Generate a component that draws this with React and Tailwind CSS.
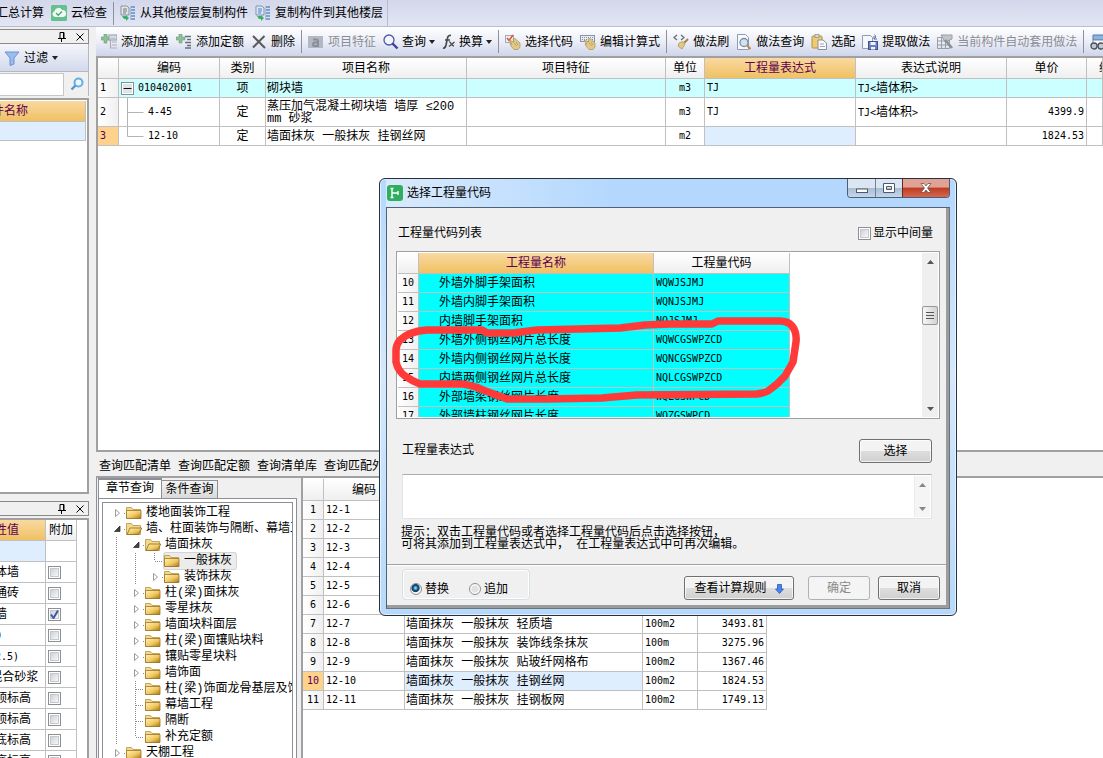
import { useState } from 'react';

const billRows = [
  { code: '010402001', type: '项', name: '砌块墙', unit: 'm3', expr: 'TJ', desc: '墙体积', price: '' },
  { code: '4-45', type: '定', name: '蒸压加气混凝土砌块墙 墙厚 ≤200', name2: 'mm 砂浆', unit: 'm3', expr: 'TJ', desc: '墙体积', price: '4399.9' },
  { code: '12-10', type: '定', name: '墙面抹灰 一般抹灰 挂钢丝网', unit: 'm2', expr: '', desc: '', price: '1824.53' },
];

const quotaRows = [
  ['12-1', '墙面抹灰 一般抹灰', '100m2', ''],
  ['12-2', '墙面抹灰 一般抹灰', '100m2', ''],
  ['12-3', '墙面抹灰 一般抹灰', '100m2', ''],
  ['12-4', '墙面抹灰 一般抹灰', '100m2', ''],
  ['12-5', '墙面抹灰 一般抹灰', '100m2', ''],
  ['12-6', '墙面抹灰 一般抹灰', '100m2', ''],
  ['12-7', '墙面抹灰 一般抹灰 轻质墙', '100m2', '3493.81'],
  ['12-8', '墙面抹灰 一般抹灰 装饰线条抹灰', '100m', '3275.96'],
  ['12-9', '墙面抹灰 一般抹灰 贴玻纤网格布', '100m2', '1367.46'],
  ['12-10', '墙面抹灰 一般抹灰 挂钢丝网', '100m2', '1824.53'],
  ['12-11', '墙面抹灰 一般抹灰 挂钢板网', '100m2', '1749.13'],
];

const codeRows = [
  [10, '外墙外脚手架面积', 'WQWJSJMJ'],
  [11, '外墙内脚手架面积', 'WQNJSJMJ'],
  [12, '内墙脚手架面积', 'NQJSJMJ'],
  [13, '外墙外侧钢丝网片总长度', 'WQWCGSWPZCD'],
  [14, '外墙内侧钢丝网片总长度', 'WQNCGSWPZCD'],
  [15, '内墙两侧钢丝网片总长度', 'NQLCGSWPZCD'],
  [16, '外部墙梁钢丝网片长度', 'WQLGSWPCD'],
  [17, '外部墙柱钢丝网片长度', 'WQZGSWPCD'],
];

// guides: v = line, c = closed arrow, o = open arrow, t = tee, l = elbow
const treeRows = [
  { guides: 'c', label: '楼地面装饰工程' },
  { guides: 'o', label: '墙、柱面装饰与隔断、幕墙工程', open: true },
  { guides: 'vo', label: '墙面抹灰', open: true },
  { guides: 'vvl', label: '一般抹灰', selected: true },
  { guides: 'vvc', label: '装饰抹灰' },
  { guides: 'vc', label: '柱(梁)面抹灰' },
  { guides: 'vc', label: '零星抹灰' },
  { guides: 'vc', label: '墙面块料面层' },
  { guides: 'vc', label: '柱(梁)面镶贴块料' },
  { guides: 'vc', label: '镶贴零星块料' },
  { guides: 'vc', label: '墙饰面' },
  { guides: 'vt', label: '柱(梁)饰面龙骨基层及饰面' },
  { guides: 'vt', label: '幕墙工程' },
  { guides: 'vt', label: '隔断' },
  { guides: 'vl', label: '补充定额' },
  { guides: 'c', label: '天棚工程' },
];

const propertyRows = [
  { value: '砌体墙', checked: false },
  { value: '普通砖', checked: false },
  { value: '砖墙', checked: true },
  { value: '240', checked: false, latin: true },
  { value: '(M2.5)', checked: false, latin: true },
  { value: '-混合砂浆', checked: false },
  { value: '墙顶标高', checked: false },
  { value: '墙顶标高', checked: false },
  { value: '墙底标高', checked: false },
  { value: '墙底标高', checked: false },
];

const line = 'border-r border-b border-[#c0c0c0]';
const head = 'border-r border-b border-[#c0c0c0] bg-linear-to-b from-white to-[#efefef] p-0 pt-0.5 font-normal';
const headActive = 'border-r border-b border-[#c0c0c0] bg-linear-to-b from-[#f9d9a0] to-[#f0c162] p-0 pt-0.5 font-normal text-[#5c0050]';
const num = "font-['DejaVu_Sans_Mono','Noto_Sans_CJK_SC',monospace] text-[10px]";

function Caret() {
  return (
    <svg className="h-1 w-1.5 shrink-0" viewBox="0 0 7 4" preserveAspectRatio="none"><path d="M0 0h7L3.500 4z" fill="#222" /></svg>
  );
}

function CopyIcon({ down }) {
  return (
    <svg className="size-4 shrink-0" viewBox="0 0 16 16">
      <path d="M1 1h6l2 2v7H1z" fill={down ? '#d8e8f8' : '#e4e4e4'} stroke="#8793a5" />
      <path d="M3 4h4M3 6h4M3 8h3" stroke={down ? '#4b84c4' : '#777'} />
      <path d="M2 11h4v-1l3 3-3 3v-2H4z" fill="#3fae6b" />
      <path d="M11 2h4M11 5h4M11 8h4M11 11h4M11 14h4" stroke="#5f8fc4" strokeWidth="1.6" />
      <path d="M10.500 1v14" stroke="#a9c3de" />
    </svg>
  );
}

function CloudCheckIcon() {
  return (
    <svg className="size-4 shrink-0" viewBox="0 0 16 16">
      <rect width="16" height="16" rx="1.500" fill="#63c18c" />
      <path d="M4 12a3 3 0 0 1-.5-5.800A4 4 0 0 1 11 5a3.500 3.500 0 0 1 1 7z" fill="#f2faf5" />
      <path d="M5 8l2.200 2.200L11 6.500" fill="none" stroke="#4aa974" strokeWidth="1.400" />
    </svg>
  );
}

function AddIcon({ list }) {
  return (
    <svg className="size-4 shrink-0" viewBox="0 0 16 16">
      <path d="M3 0h3v3h3v3H6v3H3V6H0V3h3z" fill="#8fbf98" stroke="#6b9f77" strokeWidth=".6" />
      {list ? (
        <>
          <rect x="8" y="1" width="8" height="5" fill="#eceff4" stroke="#8b95a5" />
          <path d="M9.500 3h5.500M9.500 4.500h5.500" stroke="#8b95a5" strokeDasharray="1 1" />
          <path d="M11 8h5M11 11h5M11 14h5M9.500 6v8h2" fill="none" stroke="#a9aeb6" strokeWidth="1.200" />
        </>
      ) : (
        <path d="M9 2.500h6M11 5.500h4M9 8.500h6M11 11.500h4M9 14h6" stroke="#68707c" strokeWidth="1.300" />
      )}
    </svg>
  );
}

function DeleteIcon() {
  return (
    <svg className="size-4 shrink-0" viewBox="0 0 16 16"><path d="M2 2l12 12M13.500 2L2 13.500" stroke="#5b5b5b" strokeWidth="2" /></svg>
  );
}

function FeatureIcon() {
  return (
    <svg className="size-4 shrink-0" viewBox="0 0 16 16">
      <rect x="0" y="2" width="15" height="12" fill="#b4b8c2" />
      <path d="M5 5.500h3.500q1.500 0 1.500 1.500v5H6.500Q5 12 5 10.500T6.500 8.500H10" fill="none" stroke="#8a8e99" strokeWidth="2" />
    </svg>
  );
}

function SearchIcon() {
  return (
    <svg className="size-4 shrink-0" viewBox="0 0 16 16">
      <circle cx="6" cy="6" r="5" fill="#f4f6ff" stroke="#5055a8" strokeWidth="1.300" />
      <path d="M9.500 9.500l5 5" stroke="#3a3f9c" strokeWidth="2.400" />
    </svg>
  );
}

function FxIcon() {
  return (
    <svg className="h-4 w-3.5 shrink-0" viewBox="0 0 14 16" fill="none" stroke="#4c4c4c">
      <path d="M1 14c2 .5 2.500-1 3-3l1.500-7c.4-2 1.500-3 3.500-2.500M3 6h5" strokeWidth="1.700" />
      <path d="M7 8c2-1 2 4 5 4M12.500 8L7 12.500" strokeWidth="1.400" />
    </svg>
  );
}

function HandIcon({ keyboard }) {
  return (
    <svg className="size-4 shrink-0" viewBox="0 0 16 16">
      {keyboard ? (
        <>
          <rect x=".5" y="1.500" width="14" height="6" fill="#e7ebf2" stroke="#8a93a3" />
          <path d="M2 3.500h11M2 5.500h11" stroke="#8a93a3" strokeDasharray="1 1" />
        </>
      ) : (
        <>
          <rect x=".5" y="1.500" width="8" height="7" fill="#eef0f5" stroke="#a3aab8" />
          <path d="M2 4l2 2.500L8 1" fill="none" stroke="#e0503a" strokeWidth="1.500" />
        </>
      )}
      <path d="M4 6l5 2-1-3 2-.5 5 4.500v4l-2 2.500H9L6 12l-1-2.500 2 .5z" fill="#dfc88a" stroke="#a8904f" strokeWidth=".7" />
      <path d="M9 9l3 3M11 8l2 3" stroke="#a8904f" strokeWidth=".6" />
    </svg>
  );
}

function BrushIcon() {
  return (
    <svg className="size-4 shrink-0" viewBox="0 0 16 16">
      <path d="M4 1L1 3.500 4 6M8 1l3 2.500L8 6" fill="none" stroke="#626a78" strokeWidth="1.200" />
      <path d="M15 5l-4 4" stroke="#9b8450" strokeWidth="2" />
      <path d="M6 9l4-1.500 2 2.500-3 5-4-3z" fill="#e0c887" stroke="#a89055" strokeWidth=".7" />
    </svg>
  );
}

function PageSearchIcon() {
  return (
    <svg className="size-4 shrink-0" viewBox="0 0 16 16">
      <path d="M1.500.5h8l3 3v12h-11z" fill="#f7f9fc" stroke="#8e9db3" />
      <circle cx="8" cy="8.500" r="4" fill="#cfe3f2" stroke="#7d8ea3" strokeWidth="1.300" />
      <path d="M11 11.500l3.500 3.500" stroke="#c48a3c" strokeWidth="2" />
    </svg>
  );
}

function PasteIcon() {
  return (
    <svg className="size-4 shrink-0" viewBox="0 0 16 16">
      <rect x="1" y="2" width="10" height="12" rx="1" fill="#edcb72" stroke="#b58f38" />
      <rect x="4" y=".5" width="4" height="3" fill="#d8d8d8" stroke="#8b8b8b" strokeWidth=".7" />
      <path d="M7 6h5l3.500 3v6.500H7z" fill="#fafafa" stroke="#8590a2" />
      <path d="M9 10h4M9 12.500h5" stroke="#9aa4b3" />
    </svg>
  );
}

function ExtractIcon() {
  return (
    <svg className="size-4 shrink-0" viewBox="0 0 16 16">
      <path d="M.5 1.500h8l2 2v11H.5z" fill="#f4f7fc" stroke="#8f9cb3" />
      <path d="M12 5c2-1 2-3 .5-4.500M12 5l0-3M12 5l3 0" fill="none" stroke="#56739e" />
      <rect x="6.500" y="7.500" width="9" height="8" fill="#6a7fbe" stroke="#3f5390" />
      <path d="M8.500 8h5v3h-5zM9 13h4v2.500H9z" fill="#eef2fb" />
    </svg>
  );
}

function GridIcon() {
  return (
    <svg className="size-4 shrink-0" viewBox="0 0 16 16" stroke="#9a9da4" fill="none">
      <path d="M.5 3.500h12v11H.5zM.5 7h12M.5 11h12M4.500 3.500v11M8.500 3.500v11" />
      <path d="M4 1h11v4L8 8z" fill="#c2c5cb" />
      <path d="M8 6l7 8" strokeWidth="2.500" stroke="#8c8f96" />
    </svg>
  );
}

function FindIcon() {
  return (
    <svg className="size-4 shrink-0" viewBox="0 0 16 16">
      <path d="M3 1h12v5H3z" fill="#8fb3e0" stroke="#5079b3" />
      <path d="M3 6h12v5H3z" fill="#f6f8fb" stroke="#7c8ca5" />
      <circle cx="4" cy="12" r="3" fill="#c4cad3" stroke="#4a525e" strokeWidth="1.300" />
      <circle cx="11" cy="12" r="3" fill="#c4cad3" stroke="#4a525e" strokeWidth="1.300" />
    </svg>
  );
}

function FolderIcon({ open }) {
  return (
    <svg className="h-3.5 w-4 shrink-0" viewBox="0 0 16 14">
      <defs>
        <linearGradient id="folder" x1="0" y1="0" x2="1" y2="1">
          <stop offset="0" stopColor="#fff3b8" />
          <stop offset=".55" stopColor="#f0c860" />
          <stop offset="1" stopColor="#a87518" />
        </linearGradient>
      </defs>
      <path d="M.5 12.500v-11h5l1.500 2h7.500v9z" fill="#f3d98a" stroke="#b8924a" strokeWidth=".8" />
      {open ? (
        <path d="M1 12.500L4 6h11.700l-3 6.500z" fill="url(#folder)" stroke="#8d6a20" strokeWidth=".8" />
      ) : (
        <path d="M.5 4.500h14.500v8H.5z" fill="url(#folder)" stroke="#9c7424" strokeWidth=".8" />
      )}
    </svg>
  );
}

function Guide({ kind }) {
  const dots = { stroke: '#8a8a8a', strokeDasharray: '1 1' };
  return (
    <svg className="h-4 w-[19px] shrink-0" viewBox="0 0 19 16" fill="none">
      {(kind === 'v' || kind === 't') && <path d="M9.500 0v16" {...dots} />}
      {kind === 'l' && <path d="M9.500 0v8" {...dots} />}
      {(kind === 't' || kind === 'l') && <path d="M10 8.500h8" {...dots} />}
      {(kind === 'c' || kind === 'o') && <path d="M17 8.500h2" {...dots} />}
      {kind === 'c' && <path d="M8.500 4.500v7l4-3.500z" fill="#fff" stroke="#9b9b9b" />}
      {kind === 'o' && <path d="M13 5v5.500H7.500z" fill="#444" stroke="#222" strokeWidth=".7" />}
    </svg>
  );
}

function PinIcon() {
  return (
    <svg className="h-2.5 w-2" viewBox="0 0 8 10" fill="none" stroke="#000">
      <path d="M2 6V.5h4V6M5.500 1v5M0 6.500h8M3.500 7v3" />
    </svg>
  );
}

function PanelHeader() {
  return (
    <div className="flex h-[15px] items-center justify-end gap-2.5 border border-[#8a8a8a] bg-[#f0f0f0] pr-1">
      <button aria-label="固定"><PinIcon /></button>
      <button aria-label="关闭">
        <svg className="size-2" viewBox="0 0 8 8"><path d="M.5.5l7 7M7.500.5l-7 7" stroke="#000" /></svg>
      </button>
    </div>
  );
}

function ToolButton({ icon, children, disabled, menu }) {
  return (
    <button disabled={disabled} className={`flex shrink-0 items-center whitespace-nowrap ${menu ? 'gap-[3px]' : 'gap-1'} ${disabled ? 'text-[#8b8d94]' : 'text-black'}`}>
      {icon}
      <span className="pt-0.5">{children}</span>
      {menu && <Caret />}
    </button>
  );
}

function Separator() {
  return <span className="-mx-px h-[23px] w-px shrink-0 bg-[#8d919c]" />;
}

function CheckBox({ label, defaultChecked, children }) {
  return (
    <label className="flex items-center gap-0.5">
      <span className="grid size-[13px] border border-[#8e8f8f] bg-white p-px">
        <input type="checkbox" aria-label={label} defaultChecked={defaultChecked} className="peer col-start-1 row-start-1 size-[9px] appearance-none border border-[#c5c9cf] bg-linear-to-br from-[#cdd2d9] to-[#f8f8f8]" />
        <svg className="pointer-events-none invisible col-start-1 row-start-1 size-[9px] peer-checked:visible" viewBox="0 0 9 9">
          <path d="M1 4.500L3.500 8 8 .5" fill="none" stroke="#3c58a8" strokeWidth="2" />
        </svg>
      </span>
      {children}
    </label>
  );
}

function Radio({ value, mode, setMode }) {
  return (
    <label className="flex items-center gap-[3px]">
      <input
        type="radio"
        name="mode"
        checked={mode === value}
        onChange={() => setMode(value)}
        className="size-3 appearance-none rounded-full border border-[#8e8f8f] bg-[radial-gradient(#dfe1e4_40%,#fafafa_60%)] checked:bg-[radial-gradient(circle_at_45%_40%,#7fd0f4_8%,#0f5688_30%,#123a5c_45%,#f4f4f4_56%)]"
      />
      <span className="pt-0.5">{value}</span>
    </label>
  );
}

function ScrollArrow({ down }) {
  return (
    <button aria-label={down ? '向下' : '向上'} className="flex h-[17px] w-full items-center justify-center">
      <svg className="h-1 w-[7px]" viewBox="0 0 7 4"><path d={down ? 'M0 0h7L3.500 4z' : 'M0 4h7L3.500 0z'} fill="#555" /></svg>
    </button>
  );
}

function DialogButton({ children, className, disabled }) {
  return (
    <button
      disabled={disabled}
      className={`flex h-6 items-center justify-center gap-2 rounded-[3px] border pt-0.5 ${disabled ? 'border-[#adb2b5] bg-[#f4f4f4] text-[#8a8a8a]' : 'border-[#707070] bg-linear-to-b from-[#f3f3f3] from-50% via-[#dedede] via-50% to-[#cfcfcf] inset-ring inset-ring-white/70'} ${className}`}
    >
      {children}
    </button>
  );
}

function Sidebar() {
  return (
    <aside className="flex w-[89px] shrink-0 justify-end overflow-hidden">
      <div className="flex w-[166px] shrink-0 flex-col pt-0.5">
        <section className="flex min-h-0 flex-1 flex-col">
          <PanelHeader />
          <div className="flex h-7 shrink-0 items-center justify-end border-r border-b border-[#b4b8c4] bg-linear-to-b from-[#f5f6fb] to-[#d3d9ec] pr-[30px]">
            <button className="flex items-center gap-1">
              <svg className="size-4" viewBox="0 0 16 16"><path d="M1 2h14L10 8v6l-4 1.500V8z" fill="#9bbcf0" stroke="#6d92d2" /></svg>
              <span className="pt-0.5">过滤</span>
              <Caret />
            </button>
          </div>
          <div className="flex h-6 shrink-0 items-center border-r border-[#b4b8c4]">
            <input aria-label="搜索" className="h-[23px] w-[141px] border border-[#c6c6c6] bg-white px-1 outline-none" />
            <button aria-label="查找" className="ml-1.5">
              <svg className="size-3.5" viewBox="0 0 14 14">
                <circle cx="8.500" cy="5.500" r="4" fill="#eaf6fd" stroke="#66aee0" strokeWidth="2" />
                <path d="M5.500 8.500L1.500 12.500" stroke="#4d97d2" strokeWidth="2.400" />
              </svg>
            </button>
          </div>
          <div className="mt-0.5 flex-1 border-t-2 border-r-2 border-b-2 border-[#a0a0a0] bg-white pt-px pr-px">
            <table className="w-full border-separate border-spacing-0">
              <thead><tr className="h-[21px]"><th className={headActive}>构件名称</th></tr></thead>
              <tbody><tr className="h-[19px]"><td className={`bg-[#dfeeff] p-0 ${line}`} /></tr></tbody>
            </table>
          </div>
        </section>

        <section className="mt-[7px] flex h-[257px] shrink-0 flex-col overflow-hidden">
          <PanelHeader />
          <div className="mt-0.5 flex flex-1 justify-end overflow-hidden border-t-2 border-r-2 border-[#a0a0a0] bg-white pr-2.5">
            <table className="h-fit w-24 shrink-0 table-fixed border-separate border-spacing-0">
              <colgroup><col /><col className="w-[31px]" /></colgroup>
              <thead>
                <tr className="h-[21px]">
                  <th className={`${headActive} pl-0.5 text-left`}>属性值</th>
                  <th className={head}>附加</th>
                </tr>
              </thead>
              <tbody>
                <tr className="h-[21px]">
                  <td className={`bg-[#dfeeff] p-0 ${line}`} />
                  <td className={`p-0 ${line}`} />
                </tr>
                {propertyRows.map((row, i) => (
                  <tr key={i} className="h-[21px]">
                    <td className={`overflow-hidden p-0 pt-0.5 pl-0.5 whitespace-nowrap ${line} ${row.latin ? num : ''}`}>{row.value}</td>
                    <td className={`p-0 pl-0.5 ${line}`}><CheckBox label="附加" defaultChecked={row.checked} /></td>
                  </tr>
                ))}
              </tbody>
            </table>
          </div>
        </section>
      </div>
    </aside>
  );
}

function BillTable() {
  return (
    <div className="min-h-0 flex-1 overflow-hidden border-t-2 border-b-2 border-l-2 border-[#a0a0a0] bg-white">
      <table className="w-full table-fixed border-separate border-spacing-0">
        <colgroup>
          <col className="w-[21px]" />
          <col className="w-[101px]" />
          <col className="w-[46px]" />
          <col className="w-[201px]" />
          <col className="w-[199px]" />
          <col className="w-[39px]" />
          <col className="w-[151px]" />
          <col className="w-[151px]" />
          <col className="w-20" />
          <col />
        </colgroup>
        <thead>
          <tr className="h-[21px]">
            <th className={head} />
            <th className={head}>编码</th>
            <th className={head}>类别</th>
            <th className={head}>项目名称</th>
            <th className={head}>项目特征</th>
            <th className={head}>单位</th>
            <th className={headActive}>工程量表达式</th>
            <th className={head}>表达式说明</th>
            <th className={head}>单价</th>
            <th className={`${head} overflow-hidden pl-3 text-left whitespace-nowrap`}>综</th>
          </tr>
        </thead>
        <tbody>
          {billRows.map((row, i) => {
            const cell = `p-0 ${line} ${i === 0 ? 'bg-[#ccffff]' : ''}`;
            return (
              <tr key={row.code} className={i === 1 ? 'h-[29px]' : 'h-[19px]'}>
                <td className={`${num} p-0 pl-0.5 ${line} ${i === 2 ? 'bg-[#ffd28c] text-[#5c0050]' : 'bg-linear-to-r from-white to-[#f0f0f0]'}`}>{i + 1}</td>
                <td className={cell}>
                  <div className={`flex items-center ${num} ${i === 0 ? 'gap-1 pl-0.5' : 'gap-1 pl-2'}`}>
                    {i === 0 ? (
                      <svg className="size-[13px]" viewBox="0 0 13 13">
                        <rect x=".5" y=".5" width="12" height="12" fill="#fff" stroke="#8e8f8f" />
                        <rect x="2" y="2" width="9" height="9" fill="#dfe2e6" />
                        <path d="M2.500 6.500h8" stroke="#111" />
                      </svg>
                    ) : (
                      <svg className={i === 1 ? 'h-7 w-[17px]' : 'h-[18px] w-[17px]'} viewBox={i === 1 ? '0 0 17 28' : '0 0 17 18'} fill="none" stroke="#b4b4b4">
                        <path d={i === 1 ? 'M.5 0v28M.5 14.500h16' : 'M.5 0v9.500h16'} />
                      </svg>
                    )}
                    <span>{row.code}</span>
                  </div>
                </td>
                <td className={`${cell} pt-0.5 text-center`}>{row.type}</td>
                <td className={`${cell} pt-0.5 pl-px leading-3 whitespace-nowrap`}>{row.name}{row.name2 && <><br />{row.name2}</>}</td>
                <td className={cell} />
                <td className={`${cell} text-center ${num}`}>{row.unit}</td>
                <td className={`p-0 pl-0.5 ${line} ${num} ${i === 0 ? 'bg-[#ccffff]' : ''} ${i === 2 ? 'bg-[#dfeeff]' : ''}`}>{row.expr}</td>
                <td className={`${cell} pt-0.5 pl-0.5`}>
                  {row.desc && <><span className={num}>TJ&lt;</span>{row.desc}<span className={num}>&gt;</span></>}
                </td>
                <td className={`${cell} pr-0.5 text-right ${num}`}>{row.price}</td>
                <td className={cell} />
              </tr>
            );
          })}
        </tbody>
      </table>
    </div>
  );
}

function ChapterTree() {
  return (
    <section className="flex w-[201px] shrink-0 flex-col border-l border-[#8d8f96] bg-[#f0f0f0] pl-px">
      <div role="tablist" className="flex h-5 shrink-0 items-end">
        <button role="tab" aria-selected="true" className="h-5 w-16 border-t-2 border-r border-l border-[#8d8f96] bg-white">章节查询</button>
        <button role="tab" aria-selected="false" className="h-[18px] w-14 border-t border-r border-[#8d8f96] bg-linear-to-b from-[#f4f4f4] to-[#d9d9d9] pt-px">条件查询</button>
      </div>
      <div className="min-h-0 flex-1 border-x border-t border-[#8d8f96] bg-white px-[3px] pt-[3px]">
        <ul className="h-full overflow-hidden border-x border-t border-[#8d8f96] pt-0.5 pl-1">
          {treeRows.map((row) => (
            <li key={row.label} className="flex h-4 items-center whitespace-nowrap">
              {[...row.guides].map((kind, i) => <Guide key={i} kind={kind} />)}
              <span className={`flex h-4 items-center gap-1 pr-1 ${row.selected ? 'rounded-xs bg-[#ececec] ring ring-[#d4d4d4]' : ''}`}>
                <FolderIcon open={row.open} />
                <span>{row.label}</span>
              </span>
            </li>
          ))}
        </ul>
      </div>
    </section>
  );
}

function QuotaTable() {
  return (
    <div className="min-w-0 flex-1 overflow-hidden border-l-2 border-[#a0a0a0] bg-white pt-px">
      <table className="w-[464px] table-fixed border-separate border-spacing-0">
        <colgroup>
          <col className="w-[21px]" />
          <col className="w-[81px]" />
          <col />
          <col className="w-[55px]" />
          <col className="w-[69px]" />
        </colgroup>
        <thead>
          <tr className="h-[22px]">
            <th className={head} />
            <th className={head}>编码</th>
            <th className={head}>名称</th>
            <th className={head}>单位</th>
            <th className={head}>单价</th>
          </tr>
        </thead>
        <tbody>
          {quotaRows.map(([code, name, unit, price], i) => (
            <tr key={code} className="h-[19px]">
              <td className={`p-0 text-center ${num} ${line} ${i === 9 ? 'bg-[#ffd28c] text-[#5c0050]' : 'bg-linear-to-r from-white to-[#f0f0f0]'}`}>{i + 1}</td>
              <td className={`p-0 pl-0.5 ${num} ${line}`}>{code}</td>
              <td className={`p-0 pt-0.5 pl-px whitespace-nowrap ${line} ${i === 9 ? 'bg-[#dfeeff]' : ''}`}>{name}</td>
              <td className={`p-0 pl-0.5 ${num} ${line}`}>{unit}</td>
              <td className={`p-0 pr-0.5 text-right ${num} ${line}`}>{price}</td>
            </tr>
          ))}
        </tbody>
      </table>
    </div>
  );
}

function CodeDialog() {
  const [mode, setMode] = useState('替换');

  return (
    <div role="dialog" aria-label="选择工程量代码" className="absolute top-[178px] left-[379px] flex w-[578px] flex-col rounded-md border border-[#27323e] bg-linear-to-b from-[#b4d8fd] via-[#d4e8fd] via-45% to-[#b6d9fb] px-1.5 pb-1.5 inset-ring inset-ring-white/60">
      <header className="flex h-7 items-start justify-between bg-linear-to-r from-[#d9eafc] to-[#b4d8fd] to-40%">
        <h1 className="flex h-7 items-center gap-1 pl-px">
          <svg className="size-4" viewBox="0 0 16 16">
            <rect width="16" height="16" rx="3" fill="#2fae5e" />
            <path d="M5 3v10M5 8h6M3.500 3.500h3M3.500 12.500h3M11 6v4" fill="none" stroke="#fff" strokeWidth="1.400" />
          </svg>
          <span className="pt-0.5">选择工程量代码</span>
        </h1>
        <div className="flex h-[19px] overflow-hidden rounded-b-sm border border-t-0 border-[#4b5f75]">
          <button aria-label="最小化" className="flex w-7 items-center justify-center border-r border-[#6d8197] bg-linear-to-b from-[#dbe6f2] from-50% via-[#a9bdd2] via-50% to-[#c3d7ec]">
            <svg className="h-3 w-3" viewBox="0 0 12 12"><rect x=".5" y="7" width="11" height="3.500" fill="#fff" stroke="#4f5a68" /></svg>
          </button>
          <button aria-label="最大化" className="flex w-[26px] items-center justify-center bg-linear-to-b from-[#dbe6f2] from-50% via-[#a9bdd2] via-50% to-[#c3d7ec]">
            <svg className="h-3 w-3" viewBox="0 0 12 12"><path d="M.5 1.500h11v9H.500zM3.500 4.500v3h5v-3z" fill="#fff" fillRule="evenodd" stroke="#4f5a68" /></svg>
          </button>
          <button aria-label="关闭" className="flex w-[47px] items-center justify-center border-l border-[#6b2620] bg-linear-to-b from-[#e0a294] from-45% via-[#bf3a22] via-50% to-[#d4674d]">
            <svg className="h-3 w-3" viewBox="0 0 12 12"><path d="M1 1.500h3l2 2.500 2-2.500h3L7.500 6l3.500 4.500H8L6 8l-2 2.500H1L4.500 6z" fill="#fff" stroke="#5a4650" strokeWidth=".7" /></svg>
          </button>
        </div>
      </header>

      <div className="flex flex-col border border-[#4f6378] border-r-[#6f7478] border-b-[#6f7478] bg-[#f0f0f0]">
        <div className="border-r-3 border-b-3 border-[#9a9c9e]">
          <div className="flex h-[43px] items-center justify-between pt-2 pr-[13px] pl-[11px]">
            <span>工程量代码列表</span>
            <CheckBox>显示中间量</CheckBox>
          </div>

          <div className="mr-1.5 ml-[9px] flex h-[168px] justify-between border border-[#a0a0a0] bg-white p-px">
            <div className="overflow-hidden">
              <table className="w-[392px] table-fixed border-separate border-spacing-0">
                <colgroup><col className="w-[21px]" /><col className="w-[235px]" /><col /></colgroup>
                <thead>
                  <tr className="h-[21px]">
                    <th className={head} />
                    <th className={headActive}>工程量名称</th>
                    <th className={head}>工程量代码</th>
                  </tr>
                </thead>
                <tbody>
                  {codeRows.map(([index, name, code]) => (
                    <tr key={code} className="h-[19px]">
                      <td className={`bg-linear-to-r from-white to-[#f0f0f0] p-0 text-center ${num} ${line}`}>{index}</td>
                      <td className={`bg-[#00ffff] p-0 pt-0.5 pl-5 ${line}`}>{name}</td>
                      <td className={`bg-[#00ffff] p-0 pl-0.5 ${num} ${line}`}>{code}</td>
                    </tr>
                  ))}
                </tbody>
              </table>
            </div>
            <div className="flex w-4 flex-col justify-between bg-[#efefef]">
              <ScrollArrow />
              <div className="mb-10 flex h-[19px] flex-col items-center justify-center gap-px rounded-xs border border-[#979797] bg-linear-to-r from-[#f6f6f6] to-[#d2d2d2]">
                <span className="h-0.5 w-2 border-b border-[#555]" />
                <span className="h-0.5 w-2 border-b border-[#555]" />
                <span className="h-0.5 w-2 border-b border-[#555]" />
              </div>
              <ScrollArrow down />
            </div>
          </div>

          <div className="mt-5 mr-3.5 ml-[15px] flex items-center justify-between">
            <label htmlFor="expr">工程量表达式</label>
            <DialogButton className="w-[73px]">选择</DialogButton>
          </div>
          <div className="mt-[11px] mr-3.5 ml-[15px] flex h-[45px] border border-[#dfe3ea] border-t-[#abadb3] bg-white p-px">
            <textarea id="expr" className="min-w-0 flex-1 resize-none outline-none" />
            <div className="flex w-4 flex-col justify-between border-l border-[#e3e3e3] bg-[#f2f2f2] opacity-70">
              <ScrollArrow />
              <ScrollArrow down />
            </div>
          </div>
          <p className="mt-2 ml-3.5 leading-3">
            提示：双击工程量代码或者选择工程量代码后点击选择按钮，
            <br />
            可将其添加到工程量表达式中， 在工程量表达式中可再次编辑。
          </p>

          <div className="mt-[13px] flex items-end border-t border-[#a0a0a0] pt-1 pr-1.5 pb-[5px] pl-[15px] inset-shadow-[0_1px_#fff]">
            <div className="flex h-[31px] w-32 items-center gap-5 rounded-sm border border-[#d5dfe5] pt-2 pl-[7px] inset-ring inset-ring-white">
              <Radio value="替换" mode={mode} setMode={setMode} />
              <Radio value="追加" mode={mode} setMode={setMode} />
            </div>
            <DialogButton className="ml-auto w-[110px]">
              查看计算规则
              <svg className="h-2.5 w-[9px]" viewBox="0 0 9 10"><path d="M2.500.5h4V5h2l-4 4.500L.500 5h2z" fill="#4b83ea" stroke="#2a58bd" strokeWidth=".8" /></svg>
            </DialogButton>
            <DialogButton disabled className="ml-3.5 w-[62px]">确定</DialogButton>
            <DialogButton className="ml-2 w-[62px]">取消</DialogButton>
          </div>
        </div>
      </div>

      {/* hand-drawn marker round rows 13 to 15 */}
      <svg className="pointer-events-none absolute top-[131px] left-2 h-[100px] w-[420px]" viewBox="388 310 420 100" fill="none">
        <path
          d="M718 321L712 324L670 324L645 325L620 328L537 330L513 333L487 333L482 330L427 330Q410 331 400 340Q396 345 396 350L396 362Q398 371 405 376Q412 381 420 384L463 384Q475 386 483 390L507 399L547 399L602 398L613 397L637 395L757 394Q765 393 768 391Q778 384 785 376L793 362L796 342Q797 332 792 326Q788 321 780 321Z"
          stroke="#ff3a38"
          strokeWidth="7.500"
          strokeLinejoin="round"
        />
      </svg>
    </div>
  );
}

export default function App() {
  return (
    <div className="relative flex h-screen w-full flex-col overflow-hidden bg-[#f0f0f0] font-['Liberation_Mono','Noto_Sans_CJK_SC',monospace] text-xs leading-4 text-black">
      <nav className="flex h-[27px] shrink-0 items-center border-b border-[#b9bccb] bg-linear-to-b from-[#d2d7ea] to-[#e2e6f4]">
        <div className="-ml-1 flex h-full items-center gap-[7px] border-r border-[#b9bccb] pr-1">
          <ToolButton>汇总计算</ToolButton>
          <ToolButton icon={<CloudCheckIcon />}>云检查</ToolButton>
          <Separator />
          <ToolButton icon={<CopyIcon />}>从其他楼层复制构件</ToolButton>
          <ToolButton icon={<CopyIcon down />}>复制构件到其他楼层</ToolButton>
        </div>
      </nav>

      <div className="flex min-h-0 flex-1">
        <Sidebar />

        <main className="ml-[7px] flex min-w-0 flex-1 flex-col">
          <div className="flex h-[29px] shrink-0 items-center gap-[7px] overflow-hidden bg-linear-to-b from-white via-[#eceef7] to-[#cfd5ea] pl-[5px]">
            <ToolButton icon={<AddIcon list />}>添加清单</ToolButton>
            <ToolButton icon={<AddIcon />}>添加定额</ToolButton>
            <ToolButton icon={<DeleteIcon />}>删除</ToolButton>
            <Separator />
            <ToolButton icon={<FeatureIcon />} disabled>项目特征</ToolButton>
            <ToolButton icon={<SearchIcon />} menu>查询</ToolButton>
            <ToolButton icon={<FxIcon />} menu>换算</ToolButton>
            <Separator />
            <ToolButton icon={<HandIcon />}>选择代码</ToolButton>
            <ToolButton icon={<HandIcon keyboard />}>编辑计算式</ToolButton>
            <Separator />
            <ToolButton icon={<BrushIcon />}>做法刷</ToolButton>
            <ToolButton icon={<PageSearchIcon />}>做法查询</ToolButton>
            <ToolButton icon={<PasteIcon />}>选配</ToolButton>
            <ToolButton icon={<ExtractIcon />}>提取做法</ToolButton>
            <ToolButton icon={<GridIcon />} disabled>当前构件自动套用做法</ToolButton>
            <Separator />
            <button aria-label="查找" className="shrink-0"><FindIcon /></button>
          </div>

          <BillTable />

          <div className="flex h-[306px] shrink-0 flex-col">
            <div className="flex h-[26px] shrink-0 items-center gap-[7px] border-b-2 border-[#a0a0a0] pt-1.5 pl-[3px]">
              <button>查询匹配清单</button>
              <button>查询匹配定额</button>
              <button>查询清单库</button>
              <button>查询匹配外</button>
            </div>
            <div className="flex min-h-0 flex-1 gap-1">
              <ChapterTree />
              <QuotaTable />
            </div>
          </div>
        </main>
      </div>

      <CodeDialog />
    </div>
  );
}
